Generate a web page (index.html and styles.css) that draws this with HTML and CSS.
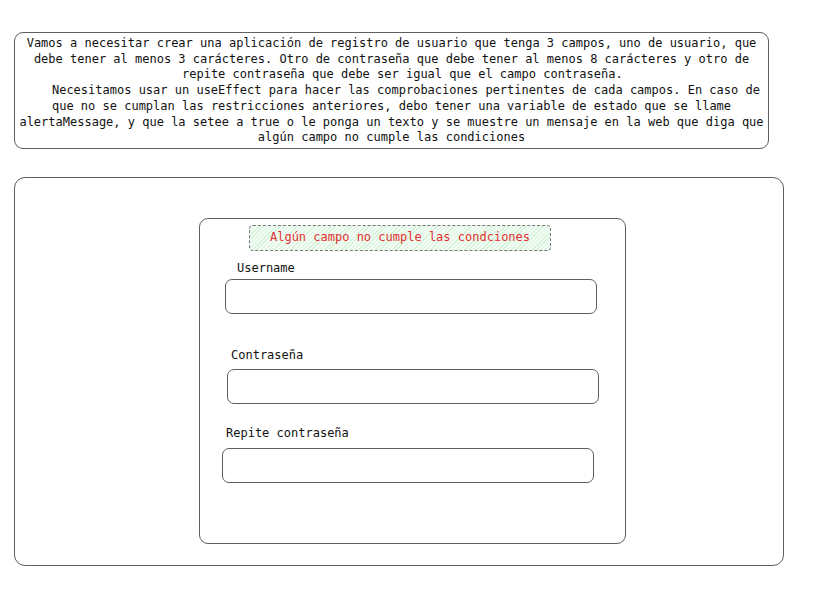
FILE: index.html
```html
<!DOCTYPE html>
<html lang="es">
<head>
<meta charset="utf-8">
<title>Registro</title>
<link rel="stylesheet" href="styles.css">
</head>
<body>
<div class="page">
  <div class="prompt"><div>Vamos a necesitar crear una aplicación de registro de usuario que tenga 3 campos, uno de usuario, que</div><div>debe tener al menos 3 carácteres. Otro de contraseña que debe tener al menos 8 carácteres y otro de</div><div>   repite contraseña que debe ser igual que el campo contraseña.</div><div>    Necesitamos usar un useEffect para hacer las comprobaciones pertinentes de cada campos. En caso de</div><div>que no se cumplan las restricciones anteriores, debo tener una variable de estado que se llame</div><div>alertaMessage, y que la setee a true o le ponga un texto y se muestre un mensaje en la web que diga que</div><div>algún campo no cumple las condiciones</div></div>

  <div class="canvas">
    <div class="card">
      <div class="alert">Algún campo no cumple las condciones</div>
      <label class="label label-user">Username</label>
      <div class="input input-user"></div>
      <label class="label label-pass">Contraseña</label>
      <div class="input input-pass"></div>
      <label class="label label-repeat">Repite contraseña</label>
      <div class="input input-repeat"></div>
    </div>
  </div>
</div>
</body>
</html>
```

FILE: styles.css
```css
* { box-sizing: border-box; }

body {
  margin: 0;
  background: #ffffff;
  color: #1e1e1e;
  font-family: "DejaVu Sans Mono", "Liberation Mono", monospace;
  font-size: 12px;
}

.page {
  display: flex;
  flex-direction: column;
  align-items: flex-start;
  padding: 32px 0 0 14px;
}

.prompt {
  width: 755px;
  height: 117px;
  border: 1px solid #5e5e5e;
  border-radius: 9px;
  padding-top: 3px;
  text-align: center;
  white-space: pre;
  line-height: 15.7px;
  font-size: 12px;
  color: #111;
}

.canvas {
  margin-top: 28px;
  width: 770px;
  height: 389px;
  border: 1px solid #5e5e5e;
  border-radius: 11px;
  display: flex;
  flex-direction: column;
  align-items: flex-start;
}

.card {
  margin: 40px 0 0 184px;
  width: 427px;
  height: 326px;
  border: 1px solid #5e5e5e;
  border-radius: 9px;
  display: flex;
  flex-direction: column;
  align-items: flex-start;
}

.alert {
  margin: 6px 0 0 49px;
  width: 302px;
  height: 26px;
  border: 1px dashed #777;
  border-radius: 4px;
  background-color: #f3fcf4;
  background-image: repeating-linear-gradient(-45deg, #d4f3d8 0 1px, transparent 1px 3px);
  color: #e03131;
  text-align: center;
  line-height: 23px;
  font-size: 12px;
}

.label {
  line-height: 16px;
  font-size: 12px;
  color: #111;
}

.input {
  width: 372px;
  height: 35px;
  border: 1px solid #5e5e5e;
  border-radius: 7px;
}

.label-user { margin: 9px 0 0 37px; }
.input-user { margin: 3px 0 0 25px; }
.label-pass { margin: 33px 0 0 31px; }
.input-pass { margin: 6px 0 0 27px; }
.label-repeat { margin: 21px 0 0 26px; }
.input-repeat { margin: 7px 0 0 22px; }
```
